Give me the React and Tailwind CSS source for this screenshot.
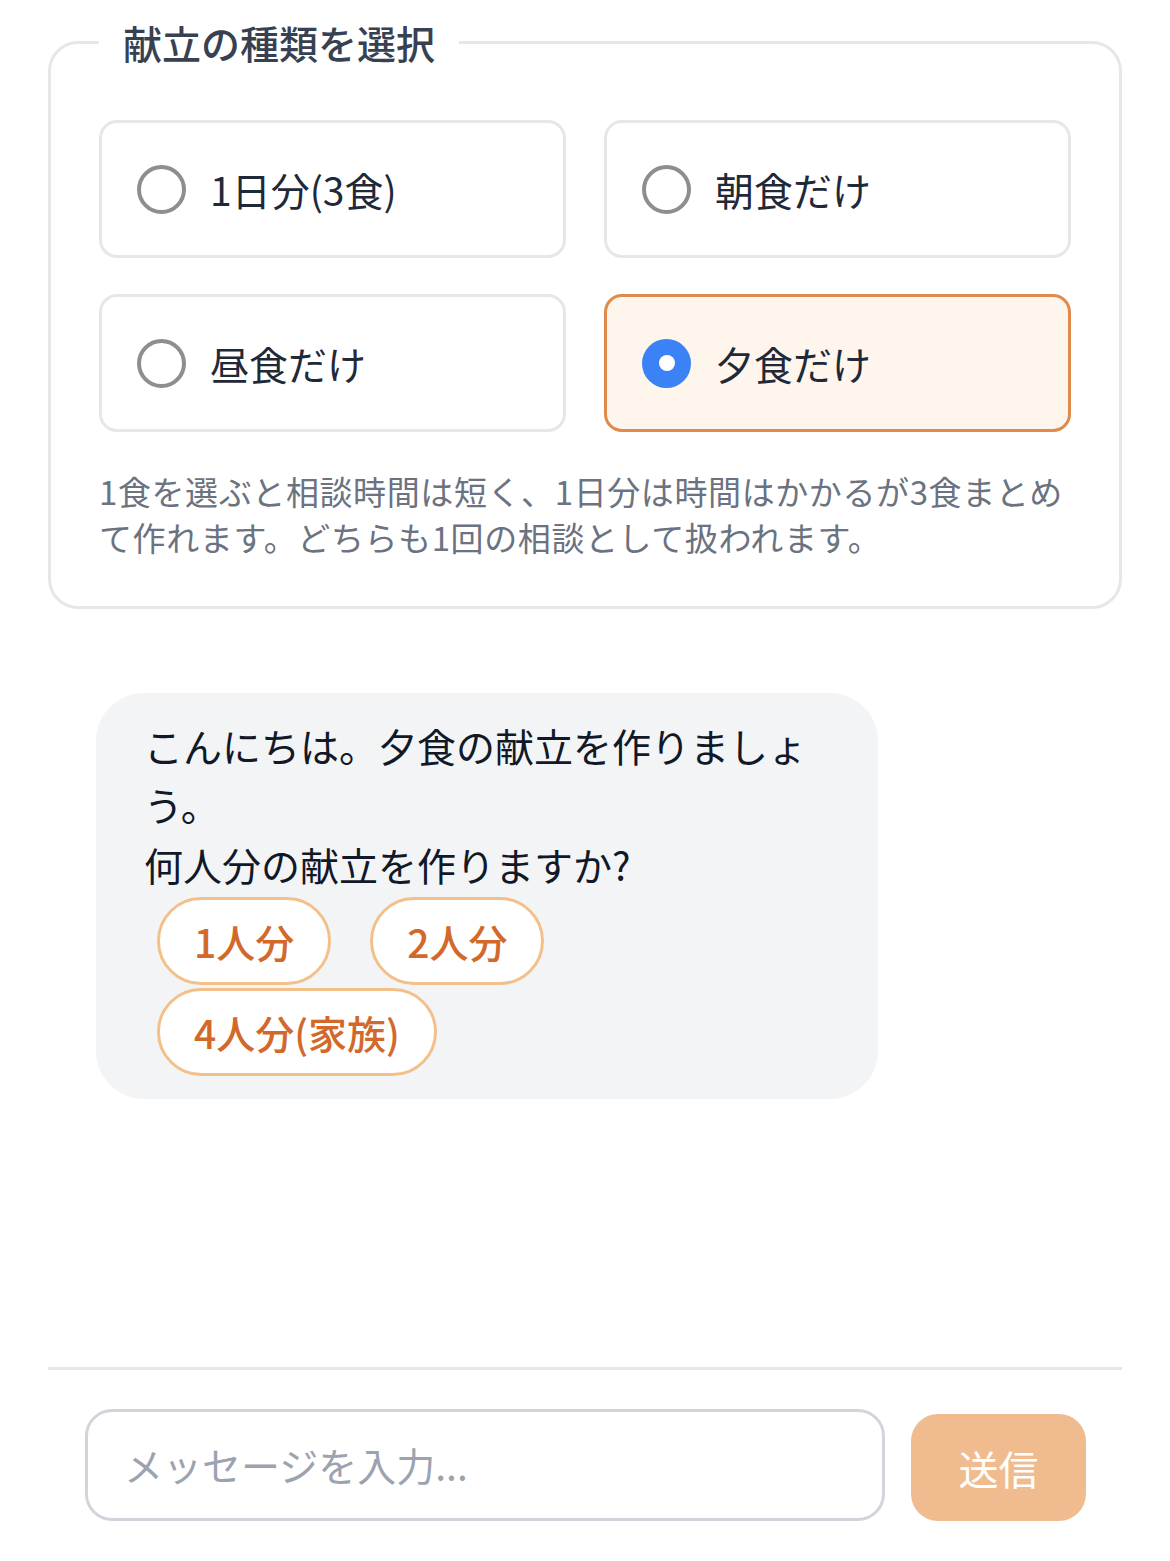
import React from "react";

const font = { fontFamily: '"Noto Sans CJK JP", "Noto Sans", sans-serif' };

function Option({ label, selected }) {
  return (
    <div
      className={
        "flex h-[138px] items-center gap-[24px] rounded-[18px] border-[3px] px-[35px] " +
        (selected ? "border-[#e08a4b] bg-[#fef6ec]" : "border-[#e5e7eb] bg-white")
      }
    >
      {selected ? (
        <span className="flex h-[49px] w-[49px] items-center justify-center rounded-full bg-[#3b82f6]">
          <span className="h-[16px] w-[16px] rounded-full bg-white" />
        </span>
      ) : (
        <span className="h-[49px] w-[49px] rounded-full border-[4px] border-[#8e8e8e] bg-white" />
      )}
      <span className="text-[39px] leading-none text-[#1f2937]">{label}</span>
    </div>
  );
}

function Chip({ children }) {
  return (
    <button className="h-[88px] rounded-full border-[3px] border-[#f3c08a] bg-white px-[34px] text-[39px] font-medium leading-none text-[#d2692b]">
      {children}
    </button>
  );
}

export default function App() {
  return (
    <div style={font} className="flex h-[1561px] flex-col bg-white">
      <div className="flex-1 px-[48px] pt-[14px]">
        <fieldset className="rounded-[30px] border-[3px] border-[#e5e7eb] px-[48px] pb-[46px] pt-[50px]">
          <legend className="px-[24px] text-[39px] font-medium leading-[56px] text-[#374151]">
            献立の種類を選択
          </legend>
          <div className="grid grid-cols-2 gap-x-[38px] gap-y-[36px]">
            <Option label="1日分(3食)" />
            <Option label="朝食だけ" />
            <Option label="昼食だけ" />
            <Option label="夕食だけ" selected />
          </div>
          <p className="mt-[36px] text-[33px] leading-[46px] tracking-[0.6px] text-[#6b7280]">
            1食を選ぶと相談時間は短く、1日分は時間はかかるが3食まとめて作れます。どちらも1回の相談として扱われます。
          </p>
        </fieldset>

        <div className="mt-[84px] pl-[48px]">
          <div className="w-[782px] rounded-[48px] bg-[#f3f4f6] pb-[23px] pl-[48px] pr-[52px] pt-[23px]">
            <p className="text-[39px] leading-[59px] text-[#111827]">
              こんにちは。夕食の献立を作りましょう。
            </p>
            <p className="text-[39px] leading-[60px] text-[#111827]">
              何人分の献立を作りますか?
            </p>
            <div className="ml-[13px] mt-[3px] flex flex-wrap gap-x-[39px] gap-y-[3px]">
              <Chip>1人分</Chip>
              <Chip>2人分</Chip>
              <Chip>4人分(家族)</Chip>
            </div>
          </div>
        </div>
      </div>

      <div className="mx-[48px] border-t-[3px] border-[#e5e7eb] pb-[40px] pl-[37px] pr-[36px] pt-[38px]">
        <div className="flex items-center gap-[26px]">
          <div className="flex h-[112px] flex-1 items-center rounded-[27px] border-[3px] border-[#d1d5db] bg-white pl-[36px]">
            <span className="text-[39px] leading-none text-[#9ca3af]">メッセージを入力...</span>
          </div>
          <button className="mt-[6px] flex h-[107px] w-[175px] items-center justify-center rounded-[27px] bg-[#f0bc8f] text-[40px] leading-none text-white">
            送信
          </button>
        </div>
      </div>
    </div>
  );
}
